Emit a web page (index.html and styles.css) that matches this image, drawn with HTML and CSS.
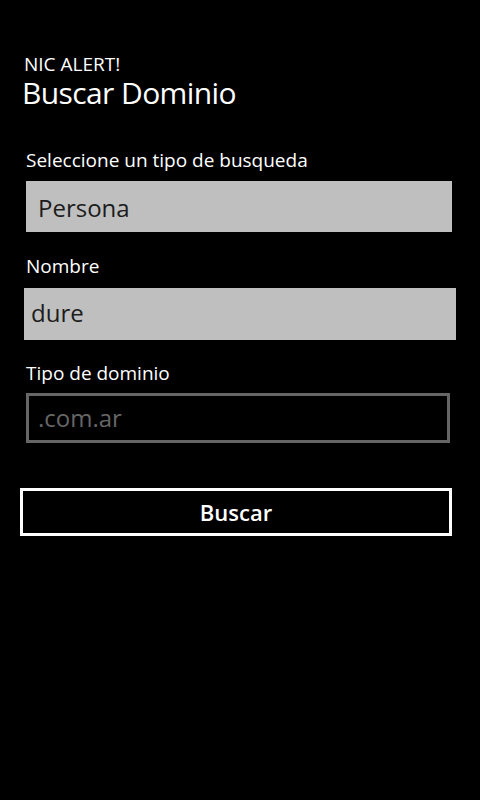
FILE: index.html
```html
<!DOCTYPE html>
<html>
<head>
<meta charset="utf-8">
<link rel="stylesheet" href="styles.css">
</head>
<body>
<div class="page">
  <header class="titles">
    <div class="app-name">NIC ALERT!</div>
    <div class="page-title">Buscar Dominio</div>
  </header>
  <main class="form">
    <div class="label l1">Seleccione un tipo de busqueda</div>
    <div class="picker">Persona</div>
    <div class="label l2">Nombre</div>
    <div class="textbox">dure</div>
    <div class="label l3">Tipo de dominio</div>
    <div class="textbox-disabled">.com.ar</div>
    <button class="btn">Buscar</button>
  </main>
</div>
</body>
</html>
```
FILE: styles.css
```css
html, body {
  margin: 0;
  padding: 0;
  background: #000;
}
body {
  width: 480px;
  height: 800px;
  font-family: "Open Sans", "Noto Sans", sans-serif;
  color: #fff;
}
.page {
  display: flex;
  flex-direction: column;
}
.titles {
  padding: 53px 0 0 0;
}
.app-name {
  padding-left: 24px;
  font-size: 19px;
  line-height: 22px;
}
.page-title {
  padding-left: 22px;
  font-size: 30px;
  letter-spacing: -0.6px;
  line-height: 36px;
}
.form {
  display: flex;
  flex-direction: column;
  align-items: flex-start;
}
.label {
  margin-left: 26px;
  font-size: 19px;
  line-height: 24px;
}
.l1 { margin-top: 37px; margin-bottom: 9px; }
.l2 { margin-top: 22px; margin-bottom: 10px; }
.l3 { margin-top: 21px; margin-bottom: 8px; }
.picker {
  box-sizing: border-box;
  margin-left: 26px;
  width: 426px;
  height: 51px;
  background: #bfbfbf;
  color: #1c1c1c;
  font-size: 24px;
  line-height: 49px;
  padding: 2px 0 0 12px;
}
.textbox {
  box-sizing: border-box;
  margin-left: 24px;
  width: 432px;
  height: 52px;
  background: #bfbfbf;
  color: #1c1c1c;
  font-size: 24px;
  line-height: 50px;
  padding: 0 0 0 7px;
}
.textbox-disabled {
  box-sizing: border-box;
  margin-left: 26px;
  width: 424px;
  height: 50px;
  border: 3px solid #666;
  color: #666;
  font-size: 24px;
  line-height: 44px;
  padding: 0 0 0 9px;
}
.btn {
  box-sizing: border-box;
  margin: 45px 0 0 20px;
  width: 432px;
  height: 48px;
  border: 3px solid #fff;
  background: #000;
  color: #fff;
  font-family: "Open Sans", "Noto Sans", sans-serif;
  font-weight: 600;
  font-size: 22px;
  line-height: 40px;
  padding: 0;
}
```
